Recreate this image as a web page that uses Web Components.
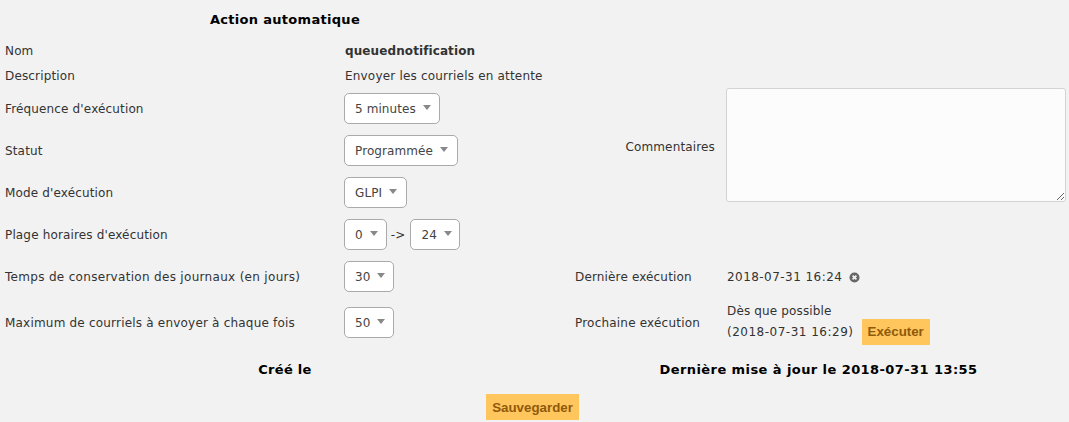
<!DOCTYPE html>
<html lang="fr">
<head>
<meta charset="utf-8">
<title>Action automatique</title>
<style>
  html, body { margin: 0; padding: 0; background: #f2f2f2; }
  body { font-family: "DejaVu Sans", Verdana, sans-serif; font-size: 12px; color: #333; letter-spacing: .15px; }
</style>
</head>
<body>

<form-table>
  <form-cell kind="head" span="2">Action automatique</form-cell>
  <form-cell span="2"></form-cell>

  <form-cell>Nom</form-cell>
  <form-cell kind="strong">queuednotification</form-cell>
  <form-cell span="2"></form-cell>

  <form-cell>Description</form-cell>
  <form-cell style="letter-spacing: .19px">Envoyer les courriels en attente</form-cell>
  <form-cell span="2"></form-cell>

  <form-cell>Fréquence d'exécution</form-cell>
  <form-cell><drop-select>5 minutes</drop-select></form-cell>
  <form-cell kind="right" rows="3">Commentaires</form-cell>
  <form-cell kind="area" rows="3"><comment-box></comment-box></form-cell>

  <form-cell>Statut</form-cell>
  <form-cell><drop-select style="padding-right: 9px">Programmée</drop-select></form-cell>

  <form-cell>Mode d'exécution</form-cell>
  <form-cell><drop-select style="padding-right: 9px">GLPI</drop-select></form-cell>

  <form-cell>Plage horaires d'exécution</form-cell>
  <form-cell><drop-select>0</drop-select><span style="margin: 0 6px 0 4px">-&gt;</span><drop-select style="padding-right: 7px">24</drop-select></form-cell>
  <form-cell span="2"></form-cell>

  <form-cell style="letter-spacing: .31px">Temps de conservation des journaux (en jours)</form-cell>
  <form-cell><drop-select>30</drop-select></form-cell>
  <form-cell>Dernière exécution</form-cell>
  <form-cell style="letter-spacing: .45px; padding-left: 6px">2018-07-31 16:24<clear-icon></clear-icon></form-cell>

  <form-cell style="letter-spacing: .2px">Maximum de courriels à envoyer à chaque fois</form-cell>
  <form-cell><drop-select>50</drop-select></form-cell>
  <form-cell style="letter-spacing: .2px">Prochaine exécution</form-cell>
  <form-cell style="padding-left: 6px">
    <next-run when="(2018-07-31 16:29)">Dès que possible</next-run>
  </form-cell>

  <form-cell kind="head" span="2">Créé le</form-cell>
  <form-cell kind="head" span="2" style="letter-spacing: .42px; padding-right: 7px">Dernière mise à jour le 2018-07-31 13:55</form-cell>

  <form-cell kind="submit" span="4"><action-button>Sauvegarder</action-button></form-cell>
</form-table>

<script>
class FormTable extends HTMLElement {
  constructor() {
    super();
    this.attachShadow({ mode: 'open' });
    this.shadowRoot.innerHTML = `
      <style>
        :host {
          display: grid;
          grid-template-columns: 340px 230px 151px 348px;
          grid-template-rows: 38px 25px 25px 42px 42px 42px 42px 42px 50px 42px 33px;
          width: 1069px;
          height: 422px;
          background: #f2f2f2;
          overflow: hidden;
        }
      </style>
      <slot></slot>`;
  }
}

class FormCell extends HTMLElement {
  constructor() {
    super();
    this.attachShadow({ mode: 'open' });
    this.shadowRoot.innerHTML = `
      <style>
        :host {
          display: flex;
          align-items: center;
          padding: 0 5px;
          min-width: 0;
          white-space: nowrap;
        }
        :host([kind="head"]) {
          justify-content: center;
          font-size: 13px;
          font-weight: bold;
          color: #000;
          letter-spacing: .3px;
        }
        :host([kind="strong"]) { font-weight: bold; letter-spacing: .1px; }
        :host([kind="right"]) { justify-content: flex-end; padding: 0 6px 8px 5px; }
        :host([kind="area"]) { align-items: flex-start; padding: 0 3px 0 5px; }
        :host([kind="submit"]) { justify-content: center; align-items: flex-start; padding: 4px 4px 0 0; }
      </style>
      <slot></slot>`;
  }

  connectedCallback() {
    const span = this.getAttribute('span');
    const rows = this.getAttribute('rows');
    if (span) this.style.gridColumnEnd = 'span ' + span;
    if (rows) this.style.gridRowEnd = 'span ' + rows;
  }
}

class DropSelect extends HTMLElement {
  constructor() {
    super();
    this.attachShadow({ mode: 'open' });
    this.shadowRoot.innerHTML = `
      <style>
        :host {
          display: inline-flex;
          align-items: center;
          box-sizing: border-box;
          height: 31px;
          margin: 0 0 1px -1px;
          padding: 0 8px 0 10px;
          background: #fff;
          border: 1px solid #aaa;
          border-radius: 5px;
          color: #444;
          letter-spacing: .1px;
        }
        .arrow {
          width: 0;
          height: 0;
          margin: 0 0 2px 7px;
          border-left: 4px solid transparent;
          border-right: 4px solid transparent;
          border-top: 5px solid #888;
        }
      </style>
      <slot></slot><span class="arrow"></span>`;
  }
}

class CommentBox extends HTMLElement {
  constructor() {
    super();
    this.attachShadow({ mode: 'open' });
    this.shadowRoot.innerHTML = `
      <style>
        :host { display: block; }
        textarea {
          display: block;
          box-sizing: border-box;
          width: 340px;
          height: 114px;
          margin: 0;
          background: #fcfcfc;
          border: 1px solid #d3d3d3;
          border-radius: 3px;
          outline: none;
        }
      </style>
      <textarea></textarea>`;
  }
}

class ClearIcon extends HTMLElement {
  constructor() {
    super();
    this.attachShadow({ mode: 'open' });
    this.shadowRoot.innerHTML = `
      <style>
        :host { display: inline-flex; margin-left: 7px; }
      </style>
      <svg width="11" height="11" viewBox="0 0 11 11">
        <circle cx="5.5" cy="5.5" r="5" fill="#666"></circle>
        <path d="M3.6 3.6l3.8 3.8M7.4 3.6l-3.8 3.8" stroke="#f2f2f2" stroke-width="1.7"></path>
      </svg>`;
  }
}

class ActionButton extends HTMLElement {
  constructor() {
    super();
    this.attachShadow({ mode: 'open' });
    this.shadowRoot.innerHTML = `
      <style>
        :host {
          display: inline-flex;
          align-items: center;
          box-sizing: border-box;
          height: 26px;
          padding: 0 6px;
          background: #ffc65d;
          color: #8f5a0a;
          font-family: "Liberation Sans", Arial, sans-serif;
          font-size: 13.33px;
          font-weight: bold;
          letter-spacing: 0;
        }
      </style>
      <slot></slot>`;
  }
}

class NextRun extends HTMLElement {
  constructor() {
    super();
    this.attachShadow({ mode: 'open' });
    this.shadowRoot.innerHTML = `
      <style>
        :host { display: block; }
        .first { line-height: 20px; margin-bottom: -2px; }
        .second { display: flex; align-items: center; line-height: 20px; letter-spacing: .5px; }
        action-button { margin-left: 8px; }
      </style>
      <div class="first"><slot></slot></div>
      <div class="second"><span class="when"></span><action-button>Exécuter</action-button></div>`;
  }

  connectedCallback() {
    this.shadowRoot.querySelector('.when').textContent = this.getAttribute('when');
  }
}

customElements.define('form-table', FormTable);
customElements.define('form-cell', FormCell);
customElements.define('drop-select', DropSelect);
customElements.define('comment-box', CommentBox);
customElements.define('clear-icon', ClearIcon);
customElements.define('action-button', ActionButton);
customElements.define('next-run', NextRun);
</script>
</body>
</html>
